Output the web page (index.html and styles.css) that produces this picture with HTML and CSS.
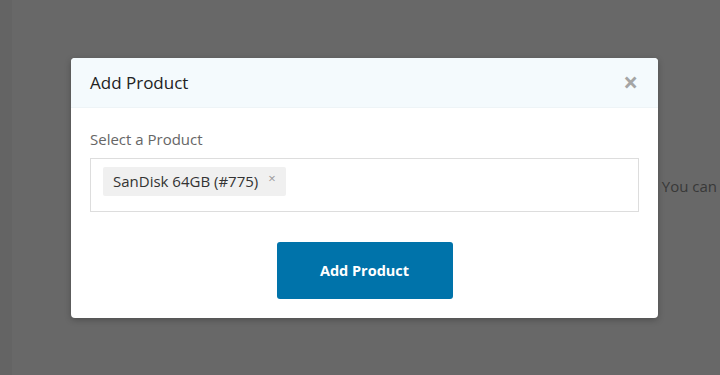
FILE: index.html
```html
<!DOCTYPE html>
<html>
<head>
  <title>Add Product</title>
  <link rel="stylesheet" href="styles.css">
</head>
<body>
  <div class="page">
    <div class="sidebar"></div>
    <div class="content">
      <p class="note">Products are attached to this list as tags. You can</p>
    </div>
  </div>

  <div class="modal">
    <div class="modal-header">
      <h2 class="modal-title">Add Product</h2>
      <span class="modal-close">&times;</span>
    </div>
    <div class="modal-body">
      <label class="field-label">Select a Product</label>
      <div class="select-box">
        <span class="tag">SanDisk 64GB (#775) <span class="tag-remove">&times;</span></span>
      </div>
      <div class="actions">
        <button class="primary-button">Add Product</button>
      </div>
    </div>
  </div>
</body>
</html>
```

FILE: styles.css
```css
body {
  margin: 0;
  background-color: #686868;
  font-family: "Open Sans", "Noto Sans", sans-serif;
  color: #333;
}

.page {
  display: flex;
  height: 375px;
  overflow: hidden;
}

.sidebar {
  width: 12px;
  background-color: #646464;
}

.content {
  flex: 1;
  padding: 176px 3px 0 0;
  text-align: right;
}

.note {
  margin: 0;
  white-space: nowrap;
  font-size: 15px;
  color: #383838;
}

.modal {
  position: absolute;
  top: 58px;
  left: 71px;
  width: 587px;
  background-color: #fff;
  border-radius: 4px;
  box-shadow: 0 2px 6px rgba(0, 0, 0, 0.25);
  overflow: hidden;
}

.modal-header {
  display: flex;
  align-items: center;
  justify-content: space-between;
  height: 49px;
  padding: 0 20px 0 19px;
  background-color: #f4fafd;
  border-bottom: 1px solid #eef4f7;
}

.modal-title {
  margin: 0;
  font-size: 17px;
  font-weight: normal;
  color: #222;
}

.modal-close {
  font-size: 26px;
  font-weight: bold;
  line-height: 1;
  color: #a5a5a5;
  margin-top: -2px;
}

.modal-body {
  padding: 21px 19px 19px 19px;
}

.field-label {
  display: block;
  font-size: 15px;
  color: #666;
  margin-bottom: 9px;
}

.select-box {
  border: 1px solid #ddd;
  padding: 8px 12px;
  box-sizing: border-box;
  height: 54px;
}

.tag {
  display: inline-block;
  height: 29px;
  line-height: 29px;
  padding: 0 10px 0 10px;
  background-color: #f0f0f0;
  border-radius: 2px;
  font-size: 15px;
  color: #333;
}

.tag-remove {
  margin-left: 6px;
  font-size: 13px;
  color: #999;
  vertical-align: top;
  position: relative;
  top: -3px;
}

.actions {
  display: flex;
  justify-content: center;
  margin-top: 30px;
}

.primary-button {
  width: 176px;
  height: 57px;
  border: none;
  border-radius: 3px;
  background-color: #0073aa;
  color: #fff;
  font-family: "Open Sans", "Noto Sans", sans-serif;
  font-size: 14.5px;
  font-weight: bold;
  cursor: pointer;
}
```
